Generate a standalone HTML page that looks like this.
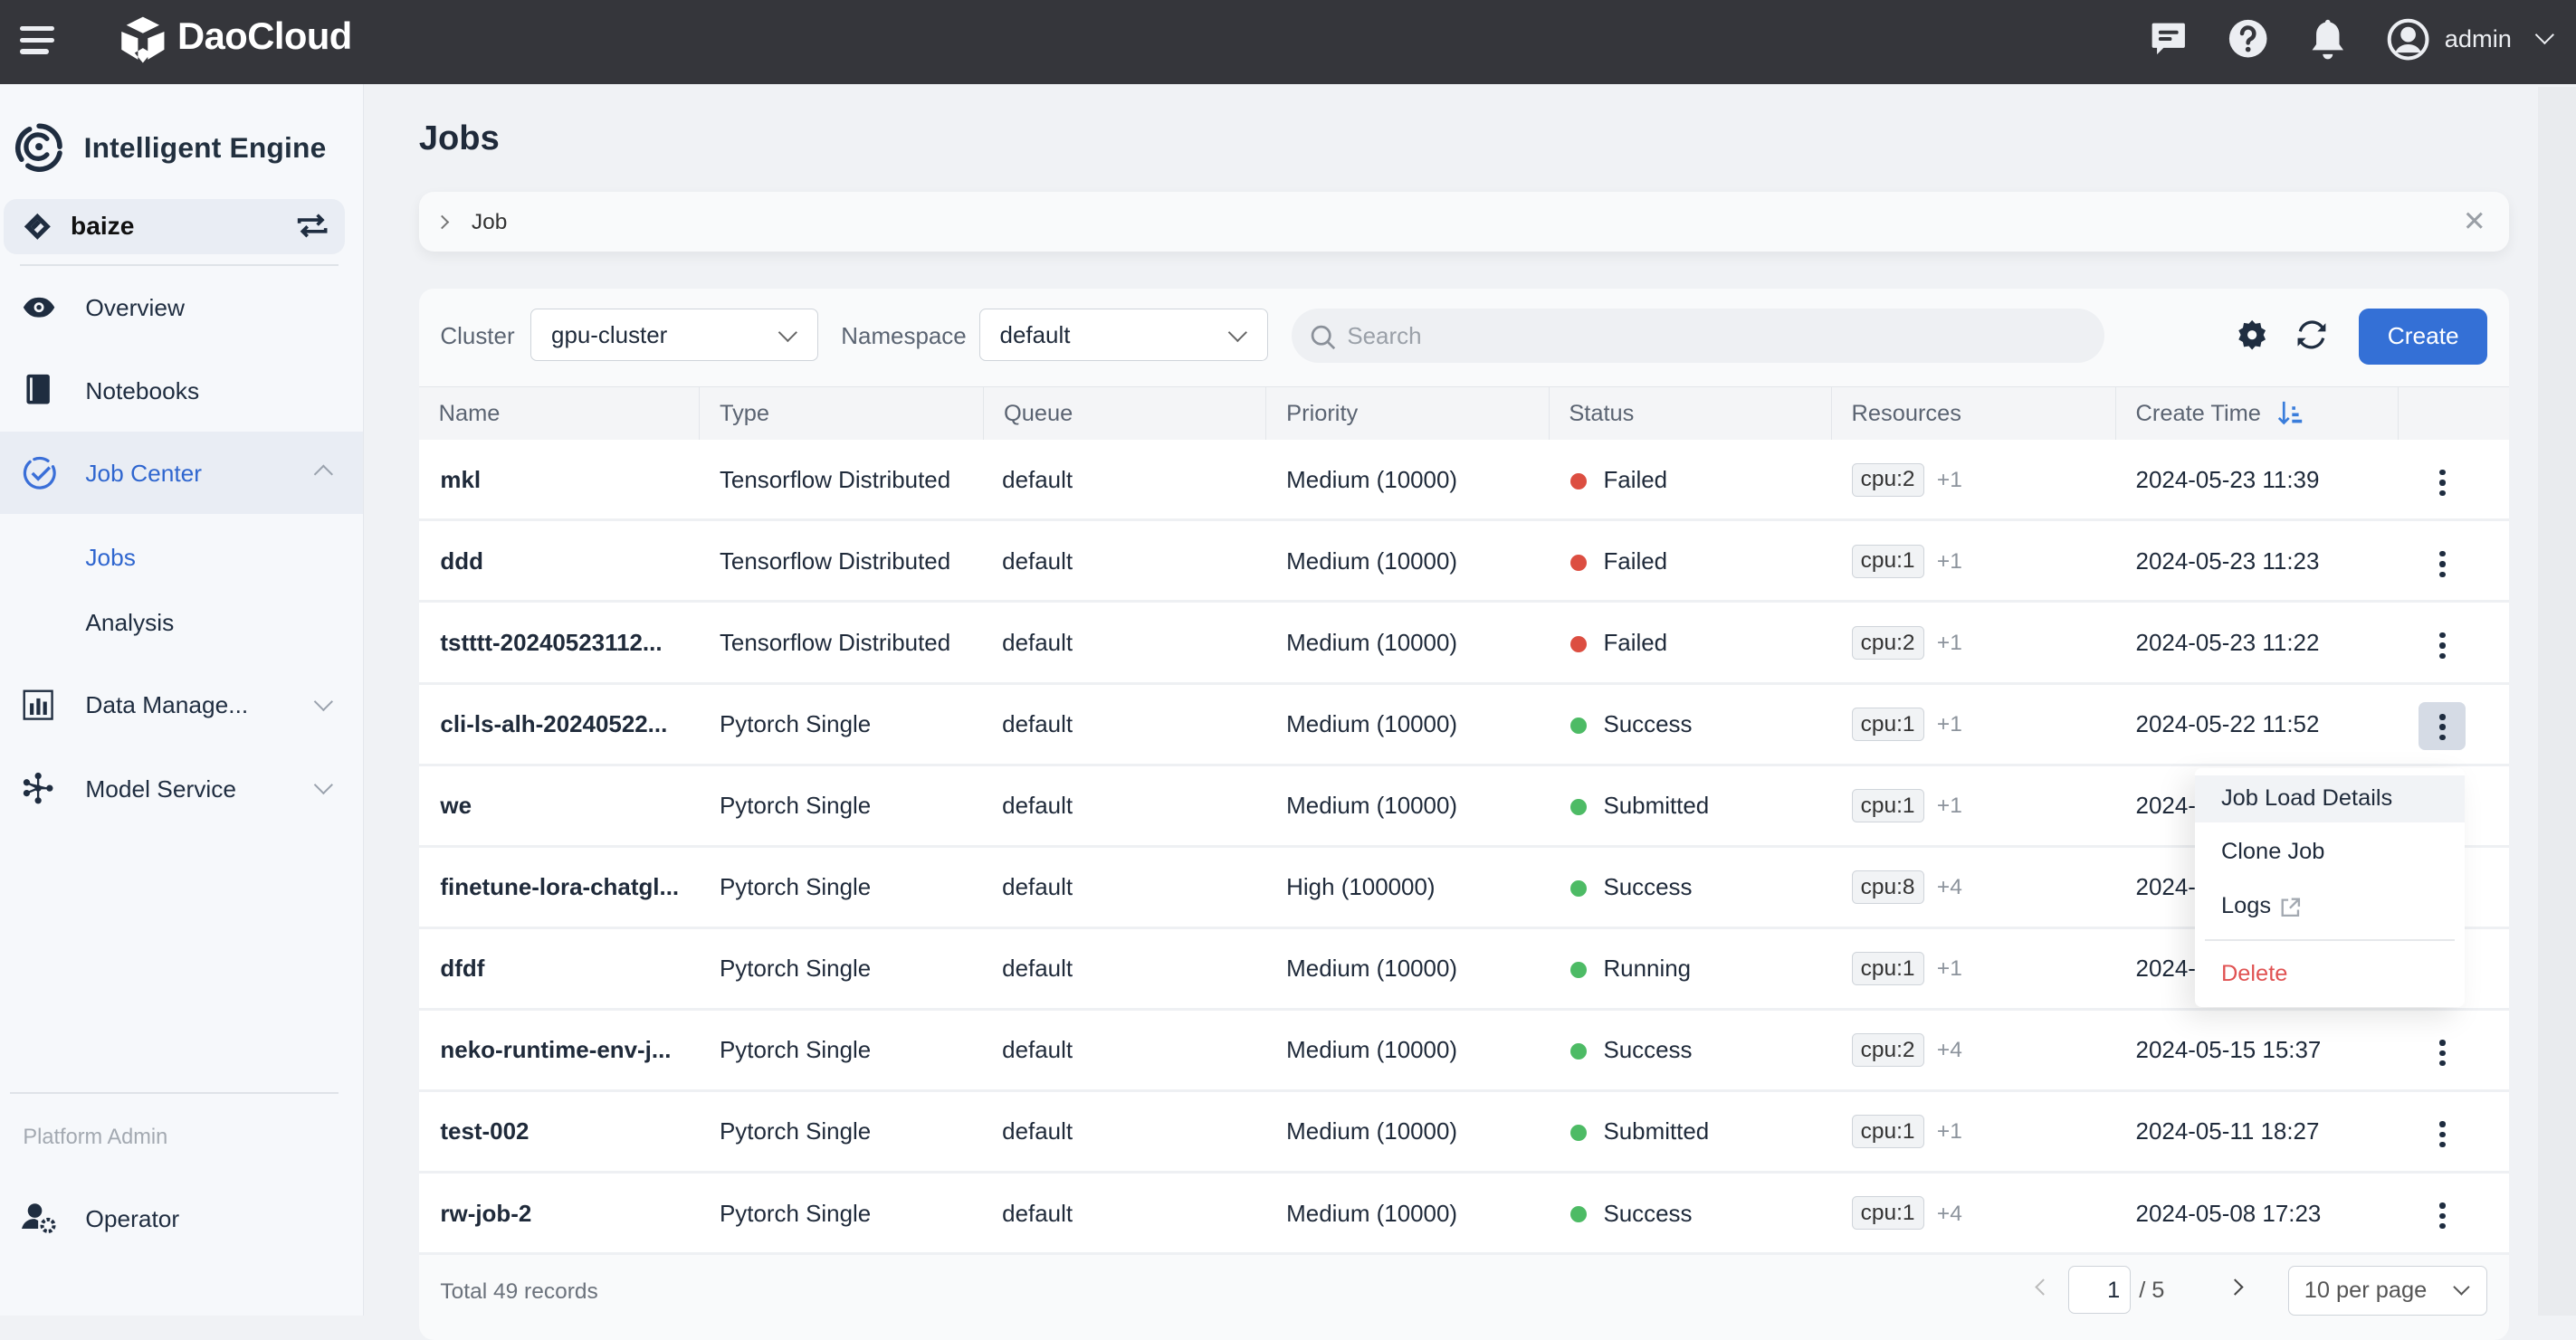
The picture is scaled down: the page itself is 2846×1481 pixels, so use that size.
<!DOCTYPE html>
<html><head><meta charset="utf-8"><style>
html,body{margin:0;padding:0}
body{width:1568px;height:801px;zoom:1.81505;overflow:hidden;font-family:"Liberation Sans",sans-serif;background:#f0f2f5;position:relative;color:#1f2a3a}
.abs{position:absolute}
.top{left:0;top:0;width:1568px;height:51px;background:#35363b}
.side{left:0;top:51px;width:221px;height:750px;background:#f6f8fb;border-right:1px solid #e4e7ec}
.nav{position:absolute;left:52px;font-size:14.5px;color:#1f2d40}
.ico{position:absolute;left:13px}
.chev{position:absolute;left:193px;width:7px;height:7px;border-right:1.3px solid #9aa2ad;border-bottom:1.3px solid #9aa2ad;transform:rotate(45deg)}
.card{background:#f9fafb;border-radius:9px}
.th{position:absolute;top:236px;height:32px;line-height:32px;font-size:14px;color:#5b6472;padding-left:12px;box-sizing:border-box;border-right:1px solid #e3e6ea}
.row{position:absolute;left:255px;width:1272px;height:49.6px;background:#fff;border-bottom:2px solid #eef0f3;box-sizing:border-box;font-size:14.3px;color:#1f2a3a}
.row span{position:absolute;top:17px;white-space:nowrap}
.dot{display:inline-block;width:10px;height:10px;border-radius:50%;margin-right:10px;vertical-align:-1px}
.tag{position:absolute;top:14px;left:872px;border:1px solid #cfd4da;background:#f1f3f5;border-radius:3px;font-size:13.5px;padding:2px 5px;color:#333;font-weight:normal}
.plus{position:absolute;top:17px;left:924px;color:#8c939c;font-size:13.5px}
.more{position:absolute;left:1230px;top:18px;width:3px}
.more i{display:block;width:3.5px;height:3.5px;background:#1f2d40;border-radius:50%;margin-bottom:2.7px}
.sel{position:absolute;top:188px;height:32px;border:1px solid #cfd4da;border-radius:4px;background:#fff;font-size:14.3px;line-height:32px;padding-left:12px;box-sizing:border-box}
.sel:after{content:"";position:absolute;right:14px;top:10px;width:7px;height:7px;border-right:1.3px solid #666;border-bottom:1.3px solid #666;transform:rotate(45deg)}
</style></head><body>
<div class="abs top"></div>
<div class="abs" style="left:12px;top:16px;width:21px;height:3px;background:#eceef2;border-radius:2px"></div>
<div class="abs" style="left:12px;top:23px;width:21px;height:3px;background:#eceef2;border-radius:2px"></div>
<div class="abs" style="left:12px;top:30px;width:18px;height:3px;background:#eceef2;border-radius:2px"></div>
<svg class="abs" style="left:70px;top:8px" width="34" height="32" viewBox="0 0 34 32"><path d="M17 2 L27 7 L17 12 L7 7Z M4 11 L14 15 L14 28 L4 22Z M30 11 L20 15 L20 28 L30 22Z M12 24 L17 30 L22 24 L17 21Z" fill="#fff"/></svg>
<div class="abs" style="left:108px;top:9px;color:#fff;font-size:23px;font-weight:bold;letter-spacing:-0.3px">DaoCloud</div>
<svg class="abs" style="left:1308px;top:12px" width="24" height="24" viewBox="0 0 24 24"><path d="M3 2h18a1 1 0 0 1 1 1v13a1 1 0 0 1-1 1H9l-4 4v-4H3a1 1 0 0 1-1-1V3a1 1 0 0 1 1-1z" fill="#eceef2"/><rect x="6" y="6.5" width="12" height="2.2" rx="1" fill="#35363b"/><rect x="6" y="10.5" width="8" height="2.2" rx="1" fill="#35363b"/></svg>
<svg class="abs" style="left:1356px;top:11px" width="25" height="25" viewBox="0 0 24 24"><circle cx="12" cy="12" r="11" fill="#eceef2"/><path d="M8.5 9a3.5 3.5 0 1 1 5 3.2c-1 .5-1.5 1.2-1.5 2.3" stroke="#35363b" stroke-width="2.4" fill="none" stroke-linecap="round"/><circle cx="12" cy="18.3" r="1.5" fill="#35363b"/></svg>
<svg class="abs" style="left:1405px;top:11px" width="24" height="26" viewBox="0 0 24 26"><path d="M12 1c1 0 1.5.7 1.5 1.5C17 3.5 19 6.5 19 10v6l2.5 3.5H2.5L5 16v-6c0-3.5 2-6.5 5.5-7.5C10.5 1.7 11 1 12 1z" fill="#eceef2"/><path d="M9 22h6a3 3 0 0 1-6 0z" fill="#eceef2"/></svg>
<svg class="abs" style="left:1453px;top:11px" width="26" height="26" viewBox="0 0 26 26"><circle cx="13" cy="13" r="11.5" fill="none" stroke="#eceef2" stroke-width="2.2"/><circle cx="13" cy="10" r="4.6" fill="#eceef2"/><path d="M5 21c2-4 5-5 8-5s6 1 8 5" fill="#eceef2"/></svg>
<div class="abs" style="left:1488px;top:15px;color:#eceef2;font-size:15px">admin</div>
<div class="abs" style="left:1545px;top:17px;width:7px;height:7px;border-right:1.5px solid #eceef2;border-bottom:1.5px solid #eceef2;transform:rotate(45deg)"></div>

<div class="abs side"></div>
<svg class="abs" style="left:8px;top:74px" width="31" height="31" viewBox="0 0 32 32"><path d="M16 3a13 13 0 0 1 13 13" stroke="#1f2d40" stroke-width="3.2" fill="none" stroke-linecap="round"/><path d="M29 20a13 13 0 0 1-20 8" stroke="#1f2d40" stroke-width="3.2" fill="none" stroke-linecap="round"/><path d="M5 24A13 13 0 0 1 10 5" stroke="#1f2d40" stroke-width="3.2" fill="none" stroke-linecap="round"/><path d="M21 11a7.5 7.5 0 1 0 0 10" stroke="#1f2d40" stroke-width="3" fill="none" stroke-linecap="round"/><circle cx="16" cy="16" r="2.3" fill="#1f2d40"/></svg>
<div class="abs" style="left:51px;top:80px;font-size:17.5px;color:#22303f;font-weight:bold;letter-spacing:.1px">Intelligent Engine</div>
<div class="abs" style="left:2px;top:121px;width:208px;height:34px;background:#e9edf4;border-radius:8px"></div>
<svg class="abs" style="left:14px;top:129px" width="18" height="18" viewBox="0 0 18 18"><path d="M9 1l8 8-8 8-8-8z" fill="#1f2d40"/><path d="M9 5l4 4-4 4-4-4z" fill="#e9edf4"/><path d="M5 9l4-4 2 2-4 4z" fill="#1f2d40"/></svg>
<div class="abs" style="left:43px;top:129px;font-size:15.5px;font-weight:bold;color:#111">baize</div>
<svg class="abs" style="left:180px;top:129px" width="20" height="17" viewBox="0 0 20 17"><path d="M2 7V5h14M13 2l3 3-3 3M18 10v2H4M7 9l-3 3 3 3" stroke="#1f2d40" stroke-width="2" fill="none"/></svg>
<div class="abs" style="left:12px;top:161px;width:194px;height:1px;background:#dfe3e8"></div>
<svg class="ico" style="top:180px" width="21" height="14" viewBox="0 0 21 14"><path d="M1 7C4 2 7 1 10.5 1S17 2 20 7c-3 5-6 6-9.5 6S4 12 1 7z" fill="#1f2d40"/><circle cx="10.5" cy="7" r="3" fill="#f6f8fb"/><circle cx="10.5" cy="7" r="1.5" fill="#1f2d40"/></svg>
<div class="nav" style="top:179px">Overview</div>
<svg class="ico" style="top:227px" width="20" height="20" viewBox="0 0 20 20"><rect x="3" y="1" width="14" height="18" rx="1.5" fill="#1f2d40"/><rect x="5" y="3" width="1.5" height="14" fill="#f6f8fb"/></svg>
<div class="nav" style="top:230px">Notebooks</div>
<div class="abs" style="left:0;top:263px;width:221px;height:50px;background:#e9edf4"></div>
<svg class="ico" style="top:277px" width="22" height="22" viewBox="0 0 22 22"><path d="M19 7a9 9 0 1 1-3-3.5" stroke="#3a6fd8" stroke-width="1.8" fill="none" stroke-linecap="round" stroke-dasharray="40 3"/><path d="M6.5 11l3.5 3.5 7-7" stroke="#3a6fd8" stroke-width="1.9" fill="none"/></svg>
<div class="nav" style="top:280px;color:#2f66cf">Job Center</div>
<div class="chev" style="top:285px;transform:rotate(-135deg)"></div>
<div class="nav" style="top:331px;color:#2f66cf">Jobs</div>
<div class="nav" style="top:371px">Analysis</div>
<svg class="ico" style="top:419px" width="20" height="20" viewBox="0 0 20 20"><rect x="1.5" y="1.5" width="17" height="17" fill="none" stroke="#1f2d40" stroke-width="1.3"/><rect x="5" y="9" width="2.3" height="7" fill="#1f2d40"/><rect x="9" y="6" width="2.3" height="10" fill="#1f2d40"/><rect x="13" y="8" width="2.3" height="8" fill="#1f2d40"/></svg>
<div class="nav" style="top:421px">Data Manage...</div>
<div class="chev" style="top:423px"></div>
<svg class="ico" style="top:470px" width="20" height="20" viewBox="0 0 20 20" fill="#1f2d40"><circle cx="10" cy="2.5" r="2"/><circle cx="10" cy="17.5" r="2"/><circle cx="3" cy="6.5" r="2"/><circle cx="3" cy="13" r="2"/><circle cx="10" cy="10" r="2"/><circle cx="17" cy="10" r="2"/><path d="M10 2v16M3 6.5l7 3.5 7 0M3 13l7-3" stroke="#1f2d40" stroke-width="1.3"/></svg>
<div class="nav" style="top:472px">Model Service</div>
<div class="chev" style="top:474px"></div>
<div class="abs" style="left:6px;top:665px;width:200px;height:1px;background:#dfe3e8"></div>
<div class="abs" style="left:14px;top:685px;font-size:13px;color:#a3a9b1">Platform Admin</div>
<svg class="ico" style="top:732px" width="22" height="20" viewBox="0 0 22 20" fill="#1f2d40"><circle cx="8" cy="5" r="4.3"/><path d="M0 16c1-4 4-6 8-6l2 1v5z"/><circle cx="16" cy="14" r="3.6" fill="none" stroke="#1f2d40" stroke-width="2.2" stroke-dasharray="2 1.2"/></svg>
<div class="nav" style="top:734px">Operator</div>

<div class="abs" style="left:255px;top:73px;font-size:21px;font-weight:bold;color:#1f2a3a">Jobs</div>
<div class="abs card" style="left:255px;top:117px;width:1272px;height:36px;box-shadow:0 3px 8px rgba(0,0,0,.06)"></div>
<div class="abs" style="left:266px;top:132px;width:5px;height:5px;border-right:1.3px solid #777;border-bottom:1.3px solid #777;transform:rotate(-45deg)"></div>
<div class="abs" style="left:287px;top:128px;font-size:13.5px;color:#333">Job</div>
<div class="abs" style="left:1499px;top:125px;font-size:17px;color:#9a9fa6">✕</div>

<div class="abs card" style="left:255px;top:176px;width:1272px;height:640px"></div>
<div class="abs" style="left:268px;top:197px;font-size:14.3px;color:#5b6472">Cluster</div>
<div class="sel" style="left:323px;width:175px">gpu-cluster</div>
<div class="abs" style="left:512px;top:197px;font-size:14.3px;color:#5b6472">Namespace</div>
<div class="sel" style="left:596px;width:176px">default</div>
<div class="abs" style="left:786px;top:188px;width:495px;height:33px;background:#eef0f3;border-radius:17px"></div>
<svg class="abs" style="left:797px;top:197px" width="16" height="16" viewBox="0 0 16 16"><circle cx="7" cy="7" r="5.3" stroke="#8a9099" stroke-width="1.5" fill="none"/><path d="M11 11l4 4" stroke="#8a9099" stroke-width="1.5"/></svg>
<div class="abs" style="left:820px;top:197px;font-size:14.3px;color:#9aa0a8">Search</div>
<svg class="abs" style="left:1361px;top:194px" width="20" height="20" viewBox="0 0 20 20"><path d="M10 1l2 2.2 3-.5.6 3 2.6 1.5-1.3 2.8 1.3 2.8-2.6 1.5-.6 3-3-.5L10 19l-2-2.2-3 .5-.6-3L1.8 12.8 3.1 10 1.8 7.2l2.6-1.5.6-3 3 .5z" fill="#1f2d40"/><circle cx="10" cy="10" r="2.8" fill="#f9fafb"/></svg>
<svg class="abs" style="left:1396px;top:193px" width="22" height="22" viewBox="0 0 22 22"><path d="M4 9a7.5 7.5 0 0 1 14-1.5M18 13a7.5 7.5 0 0 1-14 1.5" stroke="#1f2d40" stroke-width="1.8" fill="none"/><path d="M19.5 4v5h-5z M2.5 18v-5h5z" fill="#1f2d40"/></svg>
<div class="abs" style="left:1436px;top:188px;width:78px;height:34px;background:#3470d6;border-radius:6px;color:#fff;font-size:14.5px;text-align:center;line-height:34px">Create</div>

<div class="abs" style="left:255px;top:235px;width:1272px;height:33px;background:#f4f5f7;border-top:1px solid #e3e6ea"></div>
<div class="th" style="left:255px;width:171px">Name</div>
<div class="th" style="left:426px;width:173px">Type</div>
<div class="th" style="left:599px;width:172px">Queue</div>
<div class="th" style="left:771px;width:172px">Priority</div>
<div class="th" style="left:943px;width:172px">Status</div>
<div class="th" style="left:1115px;width:173px">Resources</div>
<div class="th" style="left:1288px;width:172px">Create Time <svg style="vertical-align:-3px;margin-left:6px" width="16" height="16" viewBox="0 0 16 16"><path d="M4 1v13M1 11l3 3 3-3" stroke="#3a7ddb" stroke-width="1.5" fill="none"/><rect x="9" y="4" width="2" height="2" fill="#3a7ddb"/><rect x="9" y="8" width="4" height="2" fill="#3a7ddb"/><rect x="9" y="12" width="6" height="2" fill="#3a7ddb"/></svg></div>

<div class="row" style="top:268px"><span style="left:13px;font-weight:bold">mkl</span><span style="left:183px">Tensorflow Distributed</span><span style="left:355px">default</span><span style="left:528px">Medium (10000)</span><span style="left:701px"><i class="dot" style="background:#dc4e41"></i>Failed</span><div class="tag">cpu:2</div><span class="plus">+1</span><span style="left:1045px">2024-05-23 11:39</span><div class="more"><i></i><i></i><i></i></div></div>
<div class="row" style="top:317.6px"><span style="left:13px;font-weight:bold">ddd</span><span style="left:183px">Tensorflow Distributed</span><span style="left:355px">default</span><span style="left:528px">Medium (10000)</span><span style="left:701px"><i class="dot" style="background:#dc4e41"></i>Failed</span><div class="tag">cpu:1</div><span class="plus">+1</span><span style="left:1045px">2024-05-23 11:23</span><div class="more"><i></i><i></i><i></i></div></div>
<div class="row" style="top:367.2px"><span style="left:13px;font-weight:bold">tstttt-20240523112...</span><span style="left:183px">Tensorflow Distributed</span><span style="left:355px">default</span><span style="left:528px">Medium (10000)</span><span style="left:701px"><i class="dot" style="background:#dc4e41"></i>Failed</span><div class="tag">cpu:2</div><span class="plus">+1</span><span style="left:1045px">2024-05-23 11:22</span><div class="more"><i></i><i></i><i></i></div></div>
<div class="row" style="top:416.8px"><span style="left:13px;font-weight:bold">cli-ls-alh-20240522...</span><span style="left:183px">Pytorch Single</span><span style="left:355px">default</span><span style="left:528px">Medium (10000)</span><span style="left:701px"><i class="dot" style="background:#4dbb65"></i>Success</span><div class="tag">cpu:1</div><span class="plus">+1</span><span style="left:1045px">2024-05-22 11:52</span><div class="abs" style="left:1217px;top:11px;width:29px;height:29px;background:#d5dbe5;border-radius:4px"></div><div class="more"><i></i><i></i><i></i></div></div>
<div class="row" style="top:466.4px"><span style="left:13px;font-weight:bold">we</span><span style="left:183px">Pytorch Single</span><span style="left:355px">default</span><span style="left:528px">Medium (10000)</span><span style="left:701px"><i class="dot" style="background:#4dbb65"></i>Submitted</span><div class="tag">cpu:1</div><span class="plus">+1</span><span style="left:1045px">2024-05-22 11:40</span></div>
<div class="row" style="top:516px"><span style="left:13px;font-weight:bold">finetune-lora-chatgl...</span><span style="left:183px">Pytorch Single</span><span style="left:355px">default</span><span style="left:528px">High (100000)</span><span style="left:701px"><i class="dot" style="background:#4dbb65"></i>Success</span><div class="tag">cpu:8</div><span class="plus">+4</span><span style="left:1045px">2024-05-21 10:12</span></div>
<div class="row" style="top:565.6px"><span style="left:13px;font-weight:bold">dfdf</span><span style="left:183px">Pytorch Single</span><span style="left:355px">default</span><span style="left:528px">Medium (10000)</span><span style="left:701px"><i class="dot" style="background:#4dbb65"></i>Running</span><div class="tag">cpu:1</div><span class="plus">+1</span><span style="left:1045px">2024-05-20 15:02</span></div>
<div class="row" style="top:615.2px"><span style="left:13px;font-weight:bold">neko-runtime-env-j...</span><span style="left:183px">Pytorch Single</span><span style="left:355px">default</span><span style="left:528px">Medium (10000)</span><span style="left:701px"><i class="dot" style="background:#4dbb65"></i>Success</span><div class="tag">cpu:2</div><span class="plus">+4</span><span style="left:1045px">2024-05-15 15:37</span><div class="more"><i></i><i></i><i></i></div></div>
<div class="row" style="top:664.8px"><span style="left:13px;font-weight:bold">test-002</span><span style="left:183px">Pytorch Single</span><span style="left:355px">default</span><span style="left:528px">Medium (10000)</span><span style="left:701px"><i class="dot" style="background:#4dbb65"></i>Submitted</span><div class="tag">cpu:1</div><span class="plus">+1</span><span style="left:1045px">2024-05-11 18:27</span><div class="more"><i></i><i></i><i></i></div></div>
<div class="row" style="top:714.4px"><span style="left:13px;font-weight:bold">rw-job-2</span><span style="left:183px">Pytorch Single</span><span style="left:355px">default</span><span style="left:528px">Medium (10000)</span><span style="left:701px"><i class="dot" style="background:#4dbb65"></i>Success</span><div class="tag">cpu:1</div><span class="plus">+4</span><span style="left:1045px">2024-05-08 17:23</span><div class="more"><i></i><i></i><i></i></div></div>

<div class="abs" style="left:268px;top:779px;font-size:13.5px;color:#6b727c">Total 49 records</div>
<div class="abs" style="left:1240px;top:780px;width:6px;height:6px;border-left:1.3px solid #bbb;border-bottom:1.3px solid #bbb;transform:rotate(45deg)"></div>
<div class="abs" style="left:1259px;top:771px;width:38px;height:29px;border:1px solid #cfd4da;border-radius:4px;background:#fff;font-size:14px;text-align:right;line-height:29px;box-sizing:border-box;padding-right:6px">1</div>
<div class="abs" style="left:1302px;top:778px;font-size:14px;color:#555">/ 5</div>
<div class="abs" style="left:1357px;top:780px;width:6px;height:6px;border-right:1.3px solid #444;border-top:1.3px solid #444;transform:rotate(45deg)"></div>
<div class="abs" style="left:1393px;top:771px;width:121px;height:30px;border:1px solid #cfd4da;border-radius:4px;background:#fff;font-size:14px;line-height:29px;box-sizing:border-box;padding-left:9px;color:#555">10 per page</div>
<div class="abs" style="left:1495px;top:780px;width:6px;height:6px;border-right:1.3px solid #555;border-bottom:1.3px solid #555;transform:rotate(45deg)"></div>

<div class="abs" style="left:1336px;top:468px;width:164px;height:145px;background:#fff;border-radius:4px;box-shadow:-6px 6px 18px rgba(0,0,0,.1)"></div>
<div class="abs" style="left:1336px;top:472px;width:164px;height:29px;background:#f1f3f6"></div>
<div class="abs" style="left:1352px;top:478px;font-size:14px;color:#1f2a3a">Job Load Details</div>
<div class="abs" style="left:1352px;top:511px;font-size:14px;color:#1f2a3a">Clone Job</div>
<div class="abs" style="left:1352px;top:544px;font-size:14px;color:#1f2a3a">Logs</div>
<svg class="abs" style="left:1388px;top:546px" width="13" height="13" viewBox="0 0 13 13"><path d="M5 2H1.5v9.5H11V8M7 1.5h4.5V6M11.5 1.5L6 7" stroke="#a3a9b1" stroke-width="1.3" fill="none"/></svg>
<div class="abs" style="left:1342px;top:572px;width:152px;height:1px;background:#e6e8eb"></div>
<div class="abs" style="left:1352px;top:585px;font-size:14px;color:#e05252">Delete</div>

<div class="abs" style="left:1545px;top:53px;width:23px;height:748px;background:#e9ebee"></div>
</body></html>
